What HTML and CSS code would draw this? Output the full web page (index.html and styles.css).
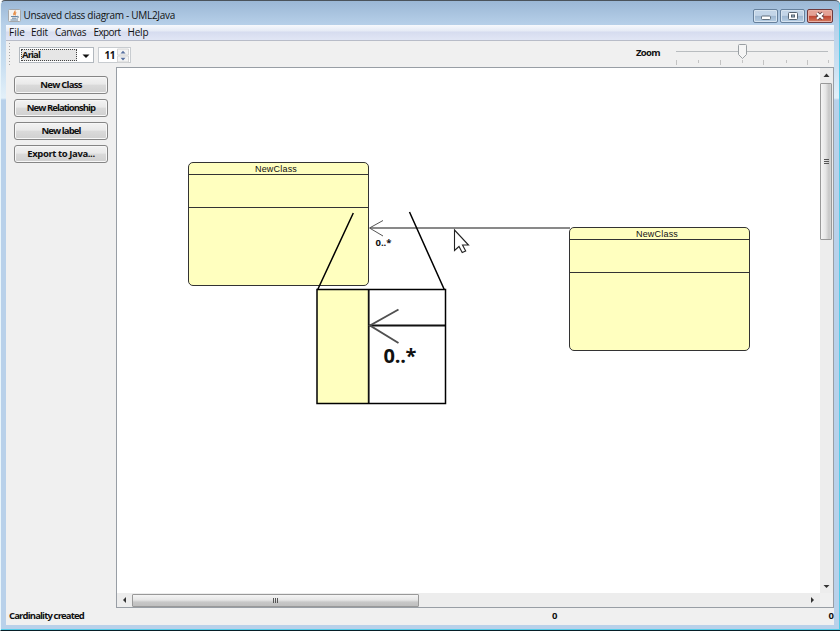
FILE: index.html
```html
<!DOCTYPE html>
<html lang="en">
<head>
<meta charset="utf-8">
<title>Unsaved class diagram - UML2Java</title>
<link rel="stylesheet" href="styles.css">
</head>
<body>
<div class="window">
  <header class="titlebar">
    <svg class="app-icon" width="13" height="13" viewBox="0 0 13 13"><rect x=".5" y=".5" width="12" height="12" rx="1" fill="#f3f3f1" stroke="#a6a8aa"/><path d="M7 1.5c1 1.5-2.4 2-1 4.8M8.3 3.5c-1.7 1-1.5 1.6-.7 2.9" fill="none" stroke="#e58a43" stroke-width="1.2"/><path d="M3 7.5h6M4 9.2h4.5M2.5 11h7.5M9 7.4c2-.6 2 1.4 0 1.8" fill="none" stroke="#6686a5"/></svg>
    <span class="title">Unsaved class diagram - UML2Java</span>
    <div class="controls">
      <span class="control"><svg width="24" height="13"><rect x="7.500" y="6" width="9" height="3.500" rx="1" fill="#fff" stroke="#62717f"/></svg></span>
      <span class="control"><svg width="24" height="13"><rect x="7.500" y="2.500" width="9" height="7" rx="1" fill="#fff" stroke="#55626f"/><rect x="10.500" y="5" width="3" height="2" fill="#a9bfd5" stroke="#55626f"/></svg></span>
      <span class="control close"><svg width="24" height="13"><path d="M9 3.300l6 5.400M15 3.300l-6 5.400" stroke="#694647" stroke-width="4"/><path d="M9 3.300l6 5.400M15 3.300l-6 5.400" stroke="#fff" stroke-width="2.200"/></svg></span>
    </div>
  </header>
  <div class="client">
    <nav class="menu"><span class="m-file">File</span><span class="m-edit">Edit</span><span class="m-canvas">Canvas</span><span class="m-export">Export</span><span class="m-help">Help</span></nav>
    <div class="toolbar">
      <div class="grip"></div>
      <div class="combo"><span class="combo-value">Arial</span><svg width="16" height="14"><path d="M5.500 6.500h7l-3.500 3.500z" fill="#111"/></svg></div>
      <div class="spinner"><span class="spinner-value">11</span><svg width="13" height="15"><path d="M.5 1h11v6h-11zM.5 8h11v6h-11z" fill="#f3f3f3" stroke="#d5d5d5"/><path d="M3.500 5.500h5l-2.500-2.800zM3.500 9.800h5l-2.500 2.800z" fill="#5871a0"/></svg></div>
      <span class="zoom-label">Zoom</span>
      <svg class="slider" width="156" height="26"><path d="M2 10.500h152" stroke="#b8bcbf"/><path d="M2.500 19v5M46.500 19v5M89.500 19v5M133.500 19v5M24.500 19v3M68.500 19v3M112.500 19v3M154.500 19v3" stroke="#c3c3c3"/><path d="M64.500 4.500q0-1 1-1h6q1 0 1 1v9l-4 4-4-4z" fill="#f5f5f5" stroke="#9a9fa3"/></svg>
    </div>
    <main class="body">
      <aside class="side">
        <button><span class="b1">New Class</span></button>
        <button><span class="b2">New Relationship</span></button>
        <button><span class="b3">New label</span></button>
        <button><span class="b4">Export to Java...</span></button>
      </aside>
      <section class="scrollpane">
        <div class="canvas">
          <div class="uml first"><div class="name"><span>NewClass</span></div><div class="attrs"></div></div>
          <div class="uml second"><div class="name"><span>NewClass</span></div><div class="attrs"></div></div>
          <svg class="links" width="703" height="525" viewBox="117 68 703 525">
            <path d="M370 228h200" stroke="#626262" stroke-width="1.300"/>
            <path d="M383 220.500l-13.500 7.500 13.500 8" fill="none" stroke="#555"/>
            <path d="M353.300 213L317.500 290M409.500 212L444.500 290" stroke="#000" stroke-width="1.500"/>
            <rect x="317" y="289.500" width="128.500" height="114" fill="#fff"/>
            <path d="M317 289.500h51.500v114h-51.500z" fill="#ffffbf"/>
            <path d="M368.700 289v114" stroke="#111" stroke-width="1.800"/>
            <path d="M369 325.500h76" stroke="#111" stroke-width="1.800"/>
            <path d="M398.500 309.500l-28.500 16 28.500 17.500" fill="none" stroke="#505050" stroke-width="1.900"/>
            <rect x="317" y="289.500" width="128.500" height="114" fill="none" stroke="#000" stroke-width="1.500"/>
            <text class="card" x="375.500" y="245.500" textLength="16">0..*</text>
            <text class="card big" x="383.500" y="362.500" textLength="33">0..*</text>
            <path d="M454.500 230v20.500l4.500-4 3.200 6 3.500-1.500-3.200-6h6z" fill="#fff" stroke="#222" stroke-width="1.100"/>
          </svg>
        </div>
        <div class="vbar"><svg width="12" height="15"><path d="M3.500 9h6l-3-3.500z" fill="#333"/></svg><div class="vthumb"><i></i><i></i><i></i></div><svg class="end" width="12" height="15"><path d="M3.500 7h6l-3 3z" fill="#333"/></svg></div>
        <div class="hbar"><svg width="15" height="14"><path d="M9 4v6l-3-3z" fill="#333"/></svg><div class="hthumb"><i></i><i></i><i></i></div><svg class="end" width="15" height="14"><path d="M6 4v6l3-3z" fill="#333"/></svg></div>
        <div class="corner"></div>
      </section>
    </main>
    <footer class="status"><span class="message">Cardinality created</span><span>0</span><span>0</span></footer>
  </div>
</div>
</body>
</html>
```
FILE: styles.css
```css
* { box-sizing: border-box; }
body { margin: 0; width: 840px; height: 631px; overflow: hidden; font: 10px "Open Sans", "Noto Sans", sans-serif; color: #111; }
svg { display: block; flex: none; }
span { white-space: nowrap; }
.window { height: 631px; padding: 0 6px 5px 5px; border-top: 1px solid #4b535b; border-bottom: 1px solid #071f28; border-left: 1px solid #e9f5fb; border-radius: 5px 5px 0 0; background: linear-gradient(#9bb7d5, #b7d0e9 24px, #c9dff1 64px, #e3f0f9 97px, #b9d1ea 99px, #b9d1ea); box-shadow: inset -1px -1px #55cde9; }
.titlebar { height: 24px; display: flex; padding: 8px 0 0 2px; }
.title { margin: -1px 0 0 2.500px; line-height: 14px; letter-spacing: -.3px; }
.controls { margin: 0 1px 0 auto; display: flex; gap: 2px; }
.control { width: 25px; height: 14px; border: 1px solid #66809c; border-radius: 2px; background: linear-gradient(#c3d5e8 45%, #9eb7d1 50%, #b6cee4); box-shadow: inset 0 0 0 1px #d7e4f0; overflow: hidden; }
.control.close { width: 26px; border-color: #703a3d; background: linear-gradient(#e4a296 45%, #bd4331 50%, #d57a5c); box-shadow: inset 0 0 0 1px #e9b1a5; }
.client { height: 600px; background: #f0f0f0; display: flex; flex-direction: column; }
.menu { height: 16px; flex: none; padding-left: 3px; display: flex; border-bottom: 1px solid #b8bcc8; background: linear-gradient(#f7f9fd, #e5eaf5 6px, #d6dcef 7px, #e1e6f5); line-height: 15px; }
.menu span { flex: none; }
.m-file { width: 22px; }
.m-edit { width: 24px; letter-spacing: -.2px; }
.m-canvas { width: 38.500px; letter-spacing: -.35px; }
.m-export { width: 34px; letter-spacing: -.6px; }
.m-help { letter-spacing: -.2px; }
.toolbar { height: 26px; flex: none; display: flex; font-weight: 700; }
.grip { width: 1px; height: 23px; margin: 2px 9px 0 3px; background: repeating-linear-gradient(#a6a6a6 0 1px, transparent 1px 3px); }
.combo { width: 75px; height: 16px; margin-top: 6px; border: 1px solid #b2b8be; background: #fff; display: flex; }
.combo-value { width: 57px; height: 12px; margin: 1px 0 0 1px; border: 1px dotted #444; background: #e6e6e6; line-height: 10px; font-size: 9.500px; letter-spacing: -.9px; }
.spinner { width: 33px; height: 16px; margin: 6px 0 0 4px; border: 1px solid #c8ccd0; background: #fff; display: flex; justify-content: flex-end; line-height: 14px; }
.spinner-value { margin-right: 2px; letter-spacing: -.5px; }
.zoom-label { margin: 5px 0 0 505px; line-height: 14px; font-size: 9.500px; letter-spacing: -.7px; width: 24px; }
.slider { margin-left: 14px; }
.body { height: 541px; display: flex; }
.side { width: 110px; padding: 9px 8px 0 8px; display: flex; flex-direction: column; gap: 5px; }
button { height: 18px; width: 94px; padding: 0 0 2px; border: 1px solid #858585; border-radius: 3px; background: linear-gradient(#f3f3f3, #e9e9e9 45%, #dadada 50%, #d0d0d0); box-shadow: inset 0 0 0 1px #f7f7f7; font: 700 9.500px/13px "Open Sans", sans-serif; color: #111; }
.b1 { letter-spacing: -.75px; }
.b2 { letter-spacing: -.95px; }
.b3 { letter-spacing: -.9px; }
.b4 { letter-spacing: -.4px; }
.scrollpane { width: 718px; height: 541px; border: 1px solid #989ea5; display: grid; grid-template: 525px 14px / 703px 13px; }
.canvas { position: relative; background: #fff; overflow: hidden; }
.links { position: absolute; left: 0; top: 0; }
.uml { position: absolute; width: 181px; height: 124px; border: 1px solid #333; border-radius: 5px; background: #ffffbf; }
.first { left: 71px; top: 94px; }
.second { left: 452px; top: 159px; }
.name { height: 12px; border-bottom: 1px solid #333; text-align: center; font: 9px/13px "Liberation Sans", sans-serif; letter-spacing: .2px; padding-right: 5px; }
.attrs { height: 33px; border-bottom: 1px solid #333; }
.card { font: 700 9.500px "Open Sans", sans-serif; fill: #111; }
.card.big { font-size: 20px; }
.vbar { display: flex; flex-direction: column; background: #ededed; }
.vthumb, .hthumb { display: flex; align-items: center; justify-content: center; gap: 1px; border: 1px solid #999; border-radius: 1px; }
.vthumb { width: 12px; height: 157px; flex-direction: column; background: linear-gradient(90deg, #f5f5f5, #e6e6e6 45%, #c7c7c7 80%, #d6d6d6); }
.vthumb i { width: 5px; height: 1px; background: #555; }
.hthumb i { width: 1px; height: 5px; background: #555; }
.hthumb { width: 287px; height: 13px; background: linear-gradient(#f5f5f5, #e6e6e6 45%, #c7c7c7 65%, #bfbfbf); }
.vbar .end { margin-top: auto; }
.hbar { display: flex; align-items: flex-end; background: #ededed; }
.hbar .end { margin-left: auto; }
.corner { background: #f0f0f0; }
.status { height: 17px; display: grid; grid-template-columns: 543px 1fr auto; padding: 0 0 0 3px; font-weight: 700; font-size: 9.500px; line-height: 16px; }
.message { letter-spacing: -.85px; }
```
